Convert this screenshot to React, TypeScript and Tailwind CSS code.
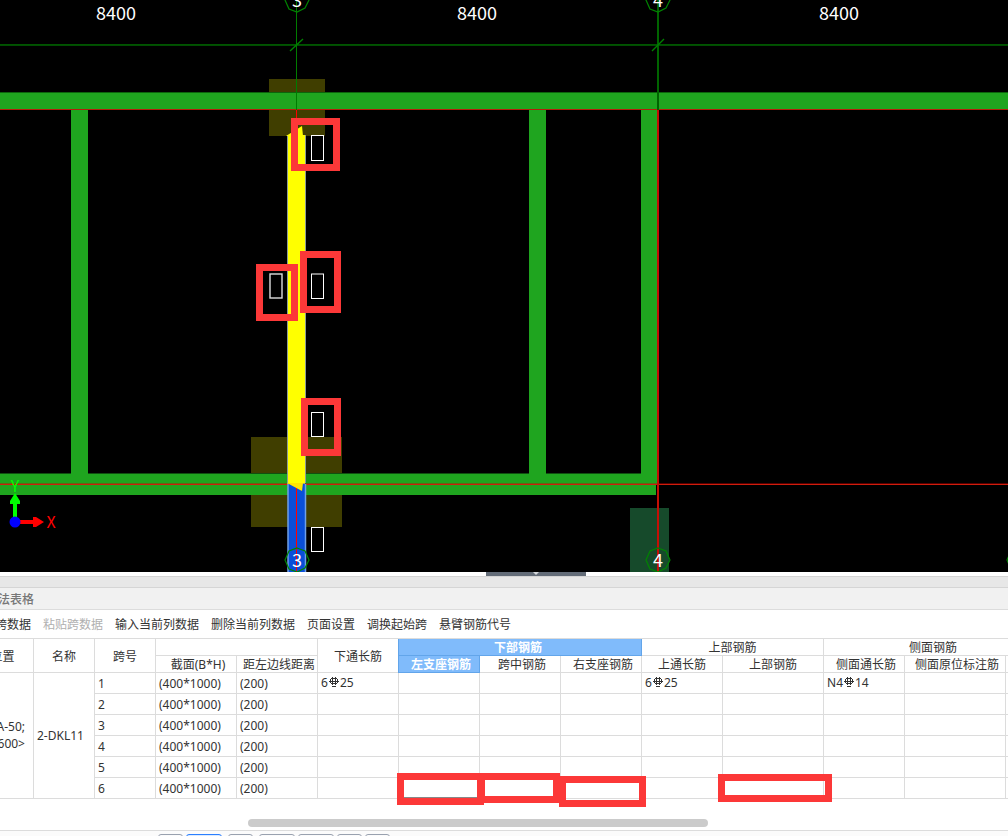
import type { ReactNode } from 'react';
import clsx from 'clsx';

const toolbar = ['跨数据', '粘贴跨数据', '输入当前列数据', '删除当前列数据', '页面设置', '调换起始跨', '悬臂钢筋代号'];

const spans = [1, 2, 3, 4, 5, 6];

// 表格中的红色标注框
const marks = [
  'left-[425px] top-[135px] w-[87px] h-8',
  'left-[506px] top-[135px] w-[82px] h-[30px]',
  'left-[587px] top-[138px] w-[87px] h-[31px]',
  'left-[746px] top-[136px] w-[114px] h-7',
];

// 底部状态栏按钮
const footerButtons = [
  'w-[25px] border-gray-400',
  'w-9 border-blue-500 bg-blue-100',
  'w-[25px] border-gray-400 ml-[3px]',
  'w-9 border-gray-400 ml-[3px]',
  'w-9 border-gray-400',
  'w-[25px] border-gray-400',
  'w-[25px] border-gray-400',
];

// 三级钢筋符号
function RebarIcon() {
  return (
    <svg
      width="10"
      height="10"
      viewBox="0 0 10 10"
      className="inline-block align-baseline mx-px"
      fill="none"
      stroke="#333"
      shapeRendering="crispEdges"
      role="img"
      aria-label="三级钢"
    >
      <path d="M2 1.5h6M1.5 2v4M8.5 2v4M2 6.5h6M0 4.5h10M3.5 0v8M6.5 0v8M3 9.5h4" />
    </svg>
  );
}

function AxisBubble({ x, y, label }: { x: number; y: number; label?: string }) {
  return (
    <g>
      <polygon
        transform={`translate(${x} ${y})`}
        points="0,-12 8,-9 12,0 8,8 0,12 -8,9 -12,0 -8,-9"
        fill="none"
        stroke="#008400"
        strokeWidth="1.2"
      />
      {label && (
        <text x={x} y={y + 7} fill="#fff" fontSize="18" textAnchor="middle">
          {label}
        </text>
      )}
    </g>
  );
}

function Drawing() {
  return (
    <svg className="block w-full h-[572px] bg-black" fontFamily='"Noto Sans CJK SC", sans-serif' role="img" aria-label="梁平面图">
      {/* 柱 */}
      <rect x="269" y="79" width="56" height="57" fill="#403e00" />
      <rect x="251" y="437" width="91" height="90" fill="#403e00" />
      <rect x="630" y="508" width="39" height="64" fill="#164a2b" />

      {/* 梁 */}
      <g fill="#1fa51f">
        <rect x="0" y="92" width="100%" height="18" />
        <rect x="71" y="110" width="17" height="364" />
        <rect x="529" y="110" width="17" height="364" />
        <rect x="0" y="473" width="656" height="22" />
        <rect x="641" y="110" width="17" height="374" />
      </g>
      <path d="M0 473.5H71M88 473.5H529M546 473.5H641" stroke="#105010" />
      <rect x="0" y="92" width="100%" height="1" fill="#0c640c" />
      <rect x="0" y="109" width="100%" height="1" fill="#b41e0a" />
      <rect x="0" y="484" width="100%" height="1" fill="#cf1d0d" />
      <rect x="0" y="483" width="100%" height="1" fill="#d00000" fillOpacity="0.4" />

      {/* 轴线与尺寸线 */}
      <rect x="0" y="44" width="100%" height="1" fill="#005400" />
      <rect x="0" y="45" width="100%" height="1" fill="#004c00" />
      <rect x="296" y="0" width="1" height="110" fill="#007c00" />
      <rect x="657" y="0" width="2" height="110" fill="#006400" />
      <path d="M290 51L303 39M652 51L664 39" stroke="#008000" strokeWidth="1.4" />
      <rect x="296" y="110" width="1" height="20" fill="#f00" />
      <rect x="657" y="110" width="2" height="462" fill="#c40f05" />

      {/* 选中的梁跨 */}
      <rect x="288" y="484" width="17" height="88" fill="#0a4fd8" />
      <path d="M288 484V572M305.5 484V572" stroke="#6fa0e6" strokeWidth="1.5" />
      <rect x="288" y="135" width="17" height="349" fill="#ff0" />
      <path d="M287.5 135V483M305.5 135V483" stroke="#8c9a96" />
      <polygon points="286,136 302,126 303,136" fill="#ff0" />
      <path d="M287 483.5H305" stroke="#a8b060" />
      <rect x="296" y="488" width="1" height="84" fill="#f00" />
      <polygon points="287,483 303,483 302,491" fill="#ffe600" />

      <g fill="none" stroke="#fff">
        <rect x="311.5" y="135.5" width="12" height="25" />
        <rect x="270" y="274" width="12" height="24" strokeWidth="1.4" stroke="#ddd" />
        <rect x="311.5" y="274" width="12" height="24.5" />
        <rect x="311.5" y="412.5" width="12" height="24" />
        <rect x="311.5" y="527.5" width="12" height="24" />
      </g>

      {/* 标注框 */}
      <g fill="none" stroke="#fc3838" strokeWidth="7">
        <rect x="294.5" y="121.5" width="42" height="46" />
        <rect x="259.5" y="267.5" width="35" height="50" />
        <rect x="303.5" y="254.5" width="34" height="55" />
        <rect x="304.5" y="401.5" width="33" height="51" />
      </g>

      <AxisBubble x={297} y={0} label="3" />
      <AxisBubble x={658} y={0} label="4" />
      <AxisBubble x={297} y={560} label="3" />
      <AxisBubble x={658} y={560} label="4" />
      <AxisBubble x={1019} y={560} />

      <g fill="#fff" fontSize="18" textAnchor="middle">
        <text x="116" y="20">8400</text>
        <text x="477" y="20">8400</text>
        <text x="839" y="20">8400</text>
      </g>

      {/* 坐标系 */}
      <path d="M13 518V504H10V501L15 493L20 501V504H17V518Z" fill="#0f0" />
      <path d="M20 520H33V517H36L44 522L36 527H33V524H20Z" fill="#f00" />
      <circle cx="15" cy="522" r="5.5" fill="#00f" />
      <text x="15" y="492" fill="#0f0" fontSize="16" textAnchor="middle">Y</text>
      <text x="51" y="528" fill="#f00" fontSize="16" textAnchor="middle">X</text>
    </svg>
  );
}

function Th({ children, className, ...rest }: { children?: ReactNode; className?: string; colSpan?: number; rowSpan?: number }) {
  return (
    <th
      className={clsx(
        'h-[17px] pt-0.5 pb-0 border-r border-b whitespace-nowrap text-center leading-[14px]',
        className ?? 'px-0 font-normal border-[#dcdcdc]',
      )}
      {...rest}
    >
      {children}
    </th>
  );
}

function Td({ children, className }: { children?: ReactNode; className?: string }) {
  return (
    <td className={clsx('h-[21px] pb-0 px-[3px] border-r border-b border-[#dcdcdc] whitespace-nowrap', className ?? 'pt-0.5 leading-[18px]')}>
      {children}
    </td>
  );
}

function Rebar({ count, size }: { count: string; size: string }) {
  return (
    <>
      {count}
      <RebarIcon />
      {size}
    </>
  );
}

function SpanTable() {
  const active = 'font-bold text-white bg-[#80bbfb] border-[#62a5ea] shadow-[-1px_0_0_#62a5ea]';
  const sub = 'pl-1 pr-0 font-normal border-[#dcdcdc]';
  const flat = 'pt-0 leading-5';
  return (
    <table className="table-fixed w-[1071px] border-separate border-spacing-0 border-t border-[#dcdcdc]">
      <colgroup>
        <col className="w-[62px]" />
        <col className="w-[61px]" />
        <col className="w-[61px]" />
        <col className="w-[81px]" />
        <col className="w-[81px]" />
        <col className="w-[81px]" />
        <col className="w-[81px]" />
        <col className="w-[81px]" />
        <col className="w-[81px]" />
        <col className="w-[81px]" />
        <col className="w-[101px]" />
        <col className="w-[81px]" />
        <col className="w-[101px]" />
        <col className="w-[37px]" />
      </colgroup>
      <thead>
        <tr>
          <Th rowSpan={2}>位置</Th>
          <Th rowSpan={2}>名称</Th>
          <Th rowSpan={2}>跨号</Th>
          <Th colSpan={2} />
          <Th rowSpan={2}>下通长筋</Th>
          <Th colSpan={3} className={clsx('pl-0 pr-1', active)}>下部钢筋</Th>
          <Th colSpan={2}>上部钢筋</Th>
          <Th colSpan={3}>侧面钢筋</Th>
        </tr>
        <tr>
          <Th className={sub}>截面(B*H)</Th>
          <Th className={sub}>距左边线距离</Th>
          <Th className={clsx('pl-1 pr-0', active)}>左支座钢筋</Th>
          <Th className={sub}>跨中钢筋</Th>
          <Th className={sub}>右支座钢筋</Th>
          <Th>上通长筋</Th>
          <Th>上部钢筋</Th>
          <Th className={sub}>侧面通长筋</Th>
          <Th className={sub}>侧面原位标注筋</Th>
          <Th />
        </tr>
      </thead>
      <tbody>
        {spans.map((n, i) => (
          <tr key={n}>
            {i === 0 && (
              <>
                <td rowSpan={6} className="pb-0.5 pr-2 border-r border-b border-[#dcdcdc] text-right leading-[17px]">
                  A-50;
                  <br />
                  600&gt;
                </td>
                <td rowSpan={6} className="px-[3px] border-r border-b border-[#dcdcdc] leading-5">2-DKL11</td>
              </>
            )}
            <Td>{n}</Td>
            <Td>(400*1000)</Td>
            <Td>(200)</Td>
            <Td className={flat}>{i === 0 && <Rebar count="6" size="25" />}</Td>
            <Td className={n === 6 ? 'shadow-[inset_0_-1px_0_#888]' : ''} />
            <Td />
            <Td />
            <Td className={flat}>{i === 0 && <Rebar count="6" size="25" />}</Td>
            <Td />
            <Td className={flat}>{i === 0 && <Rebar count="N4" size="14" />}</Td>
            <Td />
            <Td />
          </tr>
        ))}
      </tbody>
    </table>
  );
}

function App() {
  return (
    <div className="w-full overflow-hidden bg-white text-xs text-[#333] font-['Noto_Sans','Noto_Sans_CJK_SC',sans-serif]">
      <Drawing />

      <div className="h-1 flex pl-16 justify-center">
        <button aria-label="折叠" className="w-[100px] h-1 bg-[#636c78] flex justify-center">
          <svg width="6" height="3" viewBox="0 0 6 3" fill="#d5d8dc">
            <polygon points="0,0 6,0 3,3" />
          </svg>
        </button>
      </div>
      <div className="h-3 bg-[#e7e7e7] border-y border-[#d5d5d5]" />

      <section className="-ml-7">
        <h2 className="h-[22px] pl-[26px] bg-[#f1f1f1] border-b border-[#dcdcdc] leading-[23px] text-[#777] font-medium">法表格</h2>
        <div className="h-7 pt-0.5 pl-[23px] flex items-center gap-3">
          {toolbar.map(label => (
            <button
              key={label}
              disabled={label === '粘贴跨数据'}
              className="whitespace-nowrap leading-4 disabled:text-[#b0b0b0]"
            >
              {label}
            </button>
          ))}
        </div>
        <div className="relative">
          <SpanTable />
          {marks.map(pos => (
            <div key={pos} className={clsx('absolute border-[7px] border-[#fc3838]', pos)} />
          ))}
        </div>
      </section>

      <div className="pt-5 pb-[3px] pl-[248px] pr-[300px]">
        <div className="h-2 rounded-full bg-[#cbcbcb]" />
      </div>
      <footer className="h-1.5 pt-[3px] pl-[158px] flex gap-[3px] overflow-hidden bg-[#fbfbfb] border-t border-[#dcdcdc]">
        {footerButtons.map((cls, i) => (
          <button key={i} aria-label={`视图 ${i + 1}`} className={clsx('h-5 shrink-0 border rounded-[3px]', cls)} />
        ))}
      </footer>
    </div>
  );
}

export default App;
